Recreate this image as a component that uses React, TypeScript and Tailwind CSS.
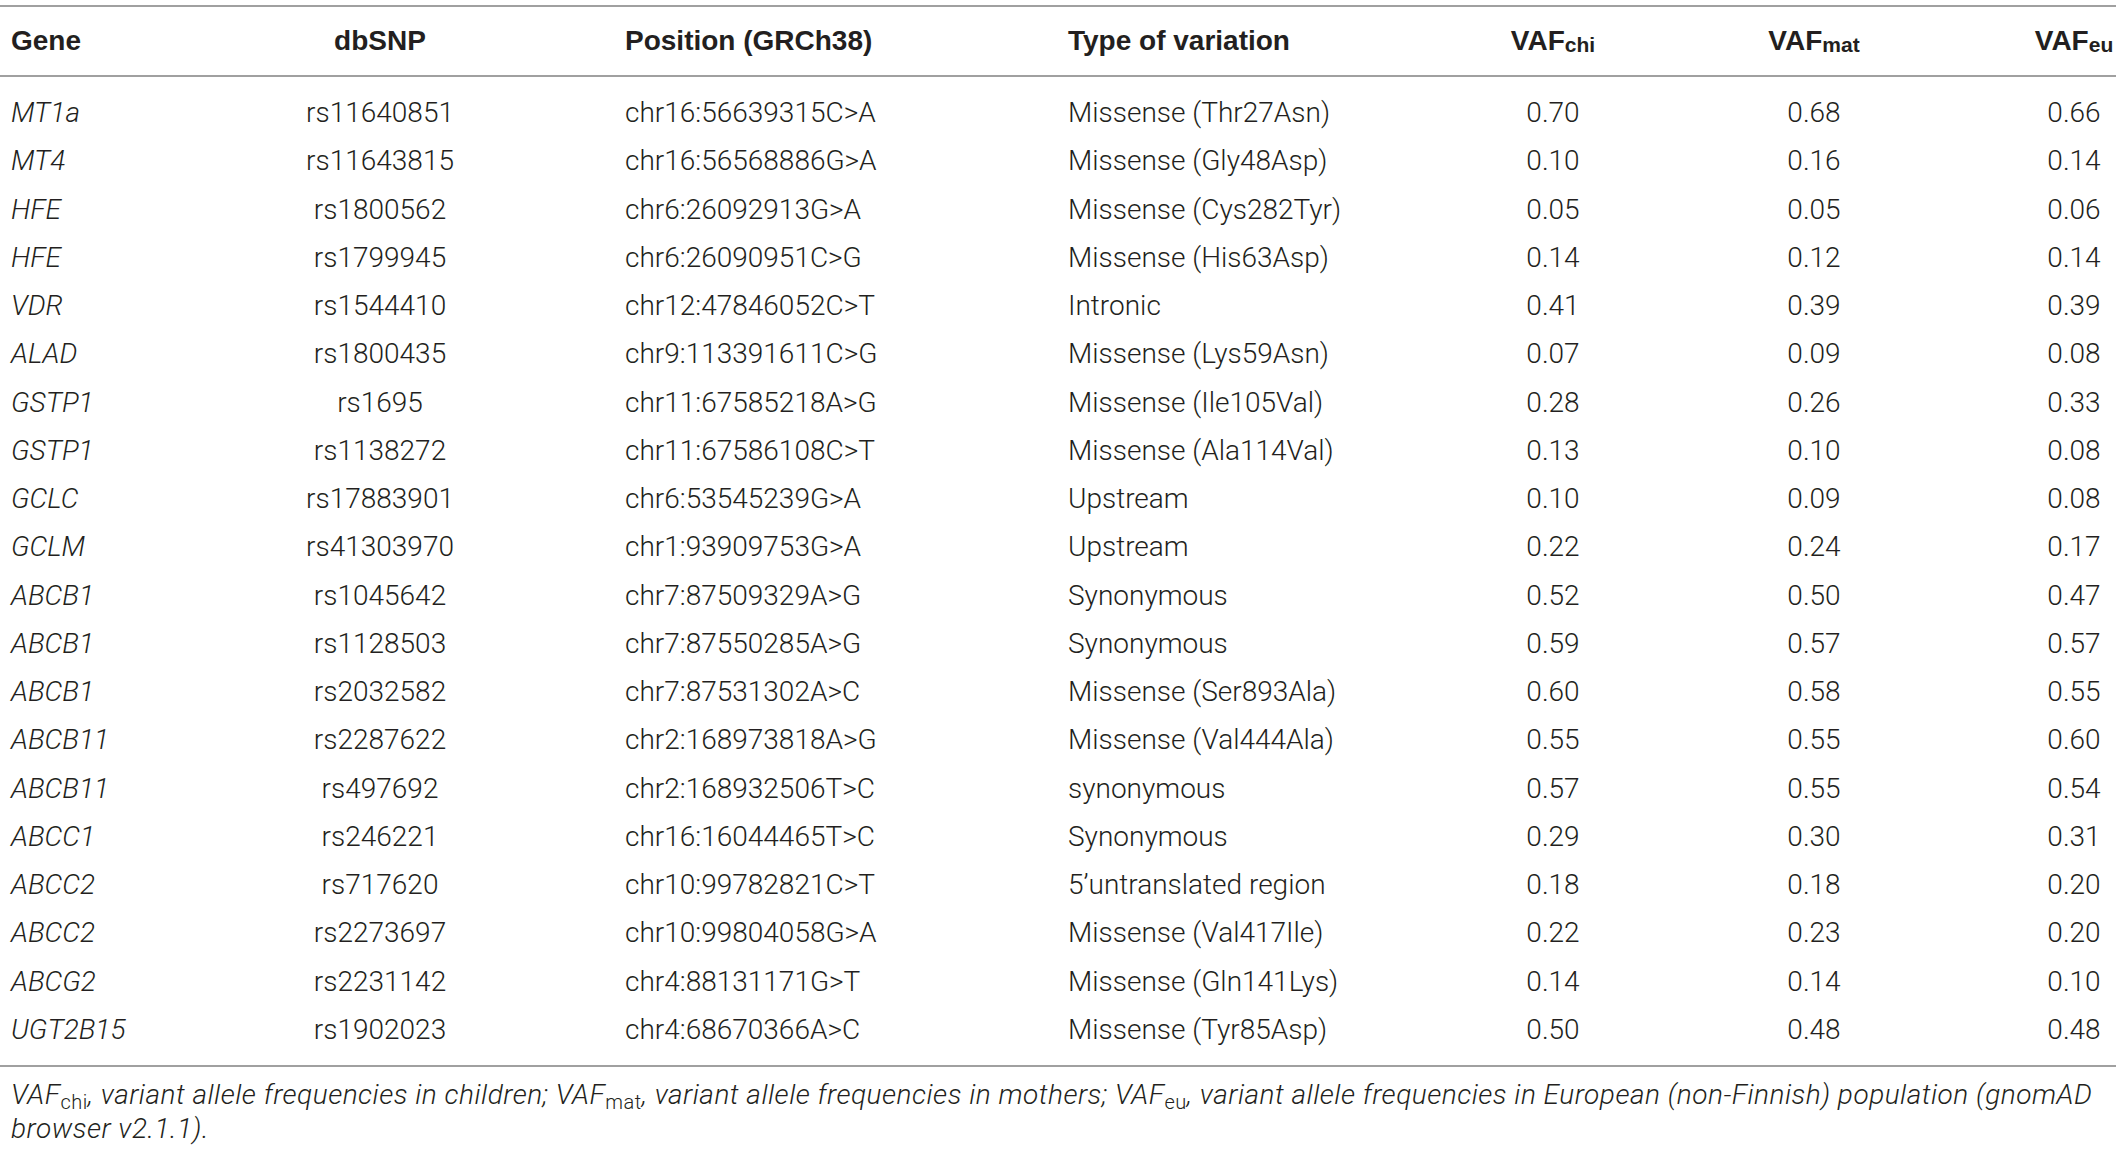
const rows: [string, string, string, string, string, string, string][] = [
  ["MT1a", "rs11640851", "chr16:56639315C>A", "Missense (Thr27Asn)", "0.70", "0.68", "0.66"],
  ["MT4", "rs11643815", "chr16:56568886G>A", "Missense (Gly48Asp)", "0.10", "0.16", "0.14"],
  ["HFE", "rs1800562", "chr6:26092913G>A", "Missense (Cys282Tyr)", "0.05", "0.05", "0.06"],
  ["HFE", "rs1799945", "chr6:26090951C>G", "Missense (His63Asp)", "0.14", "0.12", "0.14"],
  ["VDR", "rs1544410", "chr12:47846052C>T", "Intronic", "0.41", "0.39", "0.39"],
  ["ALAD", "rs1800435", "chr9:113391611C>G", "Missense (Lys59Asn)", "0.07", "0.09", "0.08"],
  ["GSTP1", "rs1695", "chr11:67585218A>G", "Missense (Ile105Val)", "0.28", "0.26", "0.33"],
  ["GSTP1", "rs1138272", "chr11:67586108C>T", "Missense (Ala114Val)", "0.13", "0.10", "0.08"],
  ["GCLC", "rs17883901", "chr6:53545239G>A", "Upstream", "0.10", "0.09", "0.08"],
  ["GCLM", "rs41303970", "chr1:93909753G>A", "Upstream", "0.22", "0.24", "0.17"],
  ["ABCB1", "rs1045642", "chr7:87509329A>G", "Synonymous", "0.52", "0.50", "0.47"],
  ["ABCB1", "rs1128503", "chr7:87550285A>G", "Synonymous", "0.59", "0.57", "0.57"],
  ["ABCB1", "rs2032582", "chr7:87531302A>C", "Missense (Ser893Ala)", "0.60", "0.58", "0.55"],
  ["ABCB11", "rs2287622", "chr2:168973818A>G", "Missense (Val444Ala)", "0.55", "0.55", "0.60"],
  ["ABCB11", "rs497692", "chr2:168932506T>C", "synonymous", "0.57", "0.55", "0.54"],
  ["ABCC1", "rs246221", "chr16:16044465T>C", "Synonymous", "0.29", "0.30", "0.31"],
  ["ABCC2", "rs717620", "chr10:99782821C>T", "5\u2019untranslated region", "0.18", "0.18", "0.20"],
  ["ABCC2", "rs2273697", "chr10:99804058G>A", "Missense (Val417Ile)", "0.22", "0.23", "0.20"],
  ["ABCG2", "rs2231142", "chr4:88131171G>T", "Missense (Gln141Lys)", "0.14", "0.14", "0.10"],
  ["UGT2B15", "rs1902023", "chr4:68670366A>C", "Missense (Tyr85Asp)", "0.50", "0.48", "0.48"],
];

// column template: gene | dbSNP (centred) | position | type | three centred VAF columns
const grid = "grid grid-cols-[146px_468px_443px_453px_86px_436px_84px] items-center whitespace-nowrap";

function Vaf({ sub }: { sub: string }) {
  return (
    <span>
      VAF<sub className="text-[21px] relative top-[2px]">{sub}</sub>
    </span>
  );
}

export default function App() {
  return (
    <div className="w-[2120px] h-[1150px] bg-white text-[#231f20] font-['Roboto',sans-serif]">
      <div className="w-[2116px] mt-[5px] border-t-2 border-[#a0a0a0]">
        <div className={`${grid} h-[70px] border-b-2 border-[#a0a0a0] font-['Liberation_Sans',Arial,sans-serif] font-bold text-[28px]`}>
          <div className="pl-[11px]">Gene</div>
          <div className="text-center">dbSNP</div>
          <div className="pl-[11px]">Position (GRCh38)</div>
          <div className="pl-[11px]">Type of variation</div>
          <div className="text-center">
            <Vaf sub="chi" />
          </div>
          <div className="text-center">
            <Vaf sub="mat" />
          </div>
          <div className="text-center">
            <Vaf sub="eu" />
          </div>
        </div>

        <div className="pt-[12px] pb-[11px] border-b-2 border-[#a0a0a0] text-[28px] font-light">
          {rows.map((r, i) => (
            <div key={i} className={`${grid} h-[48.25px]`}>
              <div className="pl-[11px] italic">{r[0]}</div>
              <div className="text-center">{r[1]}</div>
              <div className="pl-[11px]">{r[2]}</div>
              <div className="pl-[11px]">{r[3]}</div>
              <div className="text-center">{r[4]}</div>
              <div className="text-center">{r[5]}</div>
              <div className="text-center">{r[6]}</div>
            </div>
          ))}
        </div>
      </div>

      <p className="pl-[11px] pt-[11px] text-[28px] leading-[34px] tracking-[0.5px] font-light italic">
        <span className="whitespace-nowrap">
          VAF<sub className="not-italic text-[20px]">chi</sub>, variant allele frequencies in children; VAF
          <sub className="not-italic text-[20px]">mat</sub>, variant allele frequencies in mothers; VAF
          <sub className="not-italic text-[20px]">eu</sub>, variant allele frequencies in European (non-Finnish) population (gnomAD
        </span>
        <br />
        browser v2.1.1).
      </p>
    </div>
  );
}
